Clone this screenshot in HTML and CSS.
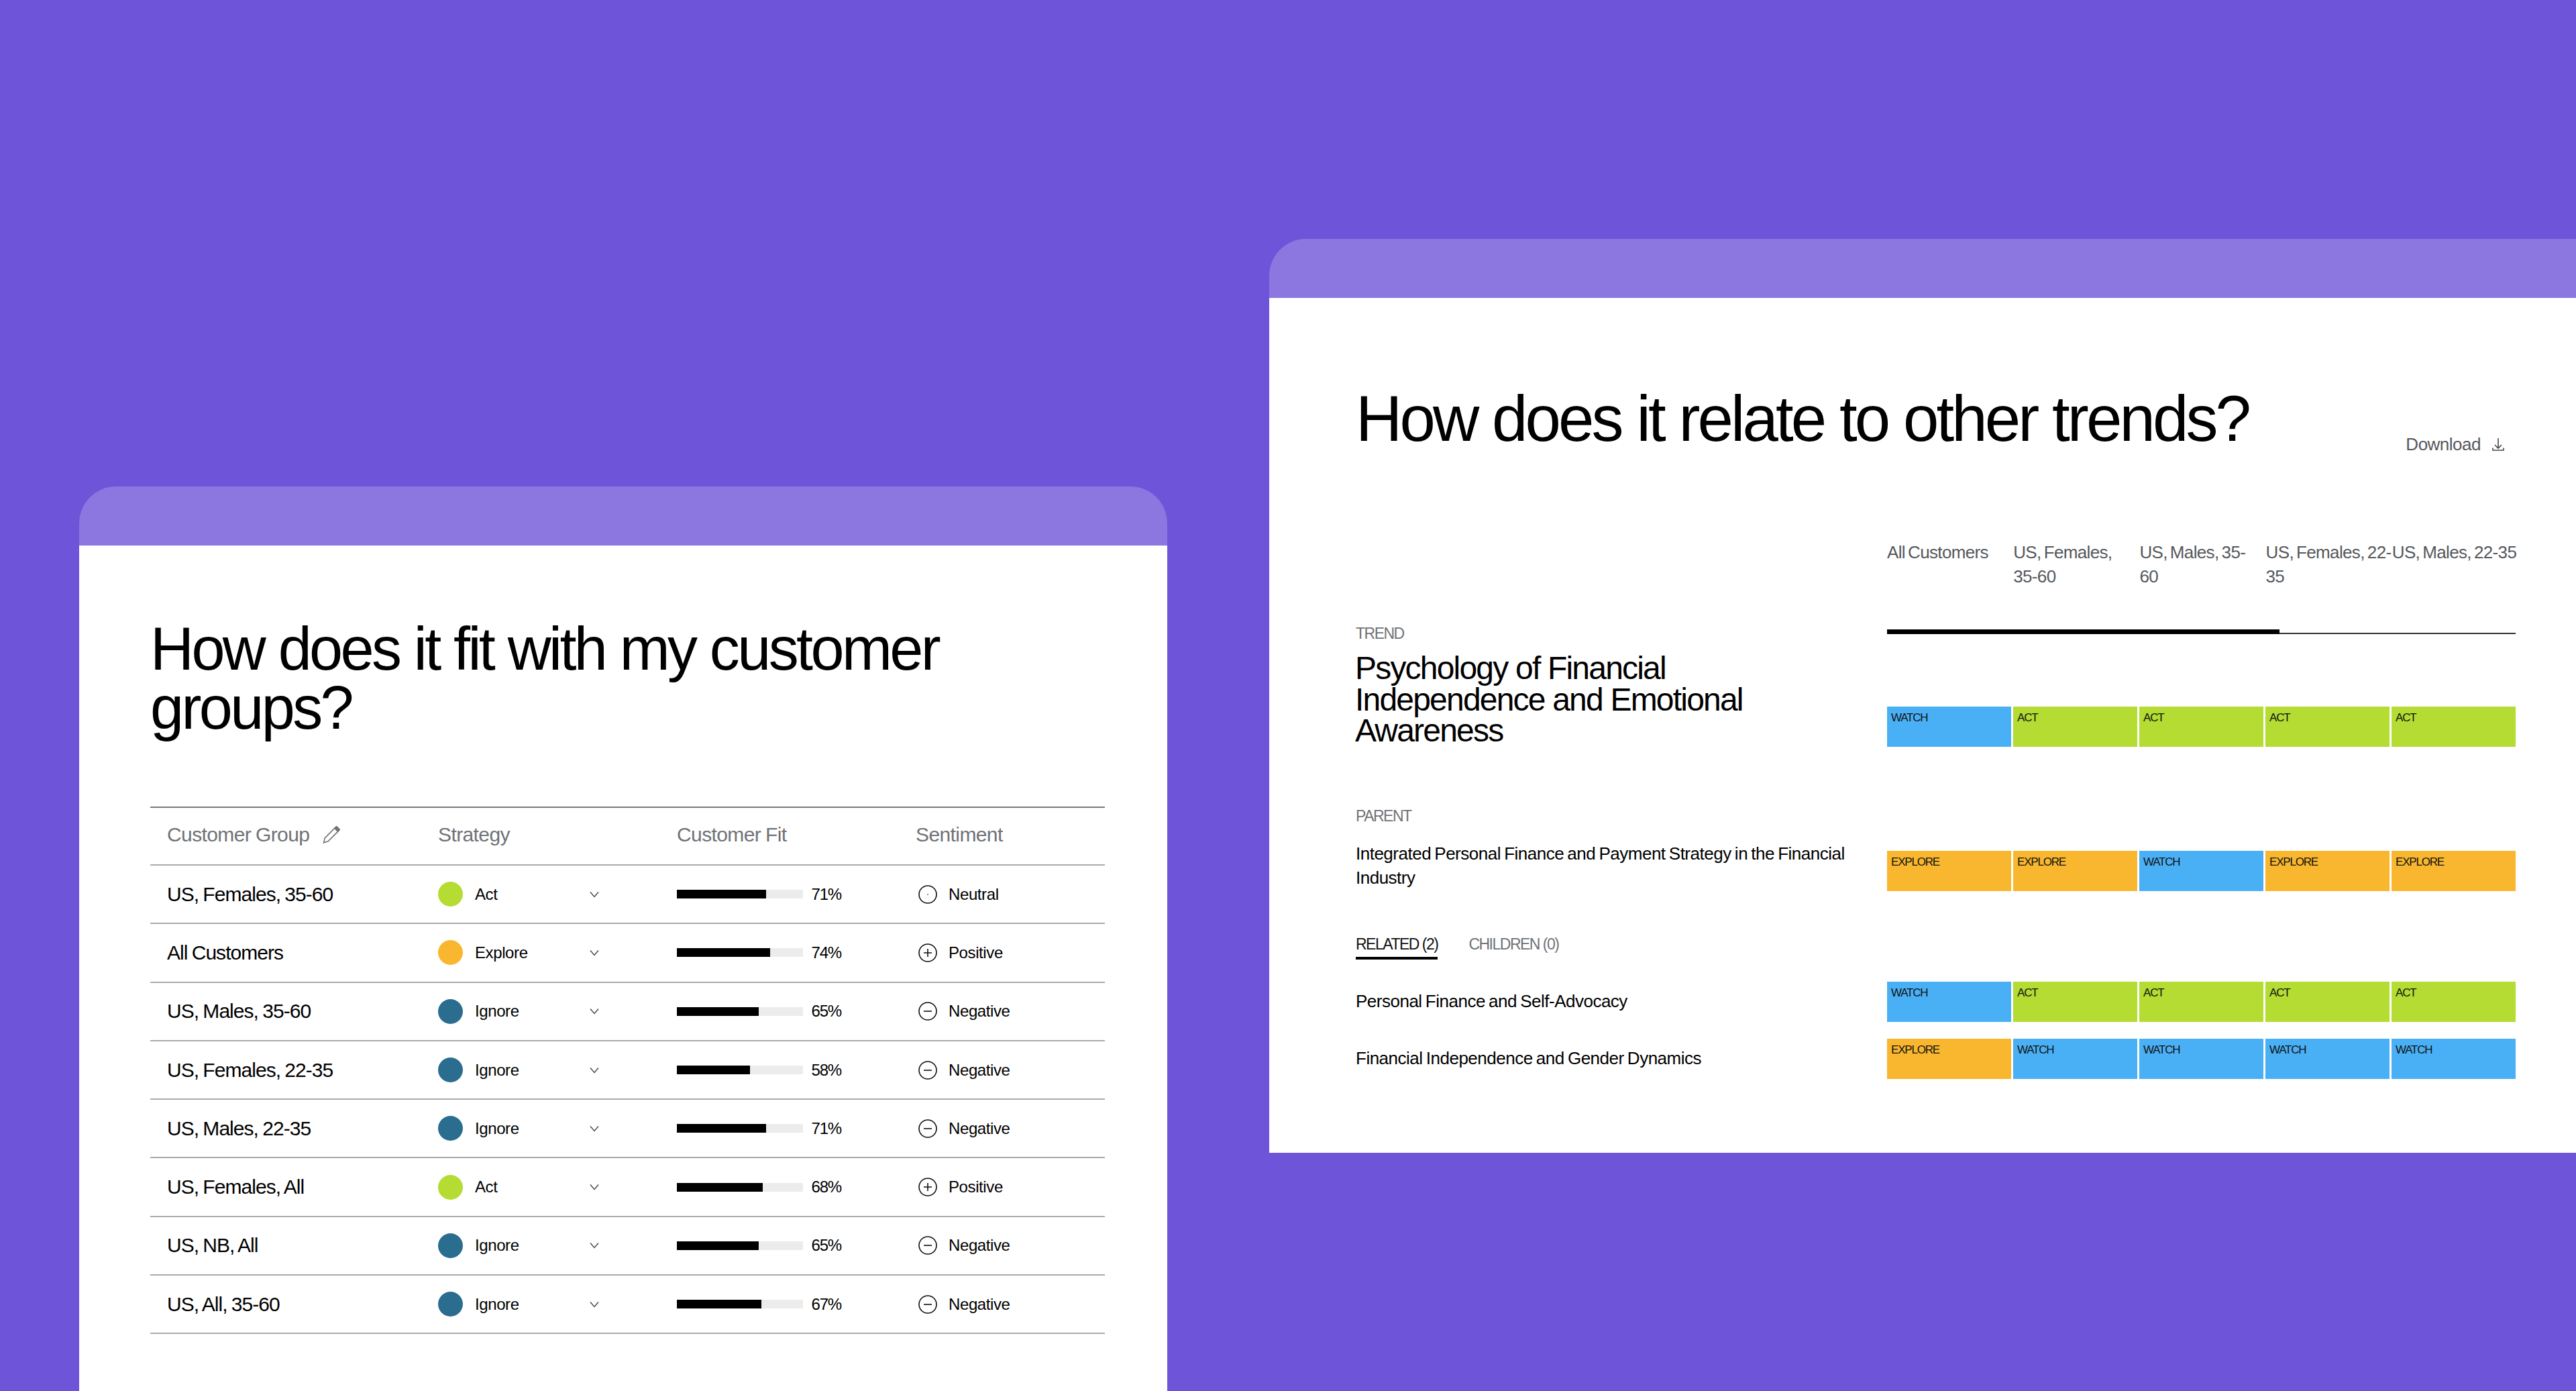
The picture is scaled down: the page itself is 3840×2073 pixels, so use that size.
FILE: index.html
```html
<!DOCTYPE html>
<html lang="en">
<head>
<meta charset="utf-8">
<title>Trend fit</title>
<link rel="stylesheet" href="styles.css">
</head>
<body>
<main class="canvas">

<section class="card card-left">
  <div class="card-tab"></div>
  <div class="card-body left-body">
    <h2 class="title title-left">How does it fit with my customer groups?</h2>
    <div class="table">
      <div class="tr th">
        <div class="th-cell">Customer Group<svg class="pencil" viewBox="0 0 24 24"><path d="M1.500 23L3 16.500 16.500 3 21 7.500 7.500 21z"/><path class="pencil-top" d="M16.500 3L19 .5 23.500 5 21 7.500z"/></svg></div>
        <div>Strategy</div>
        <div>Customer Fit</div>
        <div>Sentiment</div>
      </div>
      <div class="tr">
        <div class="name">US, Females, 35-60</div>
        <div class="strategy"><span class="dot dot-act"></span>Act<svg class="chev" viewBox="0 0 14 10"><path d="M1 1.500l6 7 6-7"/></svg></div>
        <div class="fit"><span class="track"><span class="fill" style="width:71%"></span></span><span>71%</span></div>
        <div class="sentiment"><svg class="sent" viewBox="0 0 28 28"><circle cx="14" cy="14" r="13"/><circle class="pt" cx="14" cy="14" r="0.8"/></svg>Neutral</div>
      </div>
      <div class="tr">
        <div class="name">All Customers</div>
        <div class="strategy"><span class="dot dot-explore"></span>Explore<svg class="chev" viewBox="0 0 14 10"><path d="M1 1.500l6 7 6-7"/></svg></div>
        <div class="fit"><span class="track"><span class="fill" style="width:74%"></span></span><span>74%</span></div>
        <div class="sentiment"><svg class="sent" viewBox="0 0 28 28"><circle cx="14" cy="14" r="13"/><path d="M8 14h12M14 8v12"/></svg>Positive</div>
      </div>
      <div class="tr">
        <div class="name">US, Males, 35-60</div>
        <div class="strategy"><span class="dot dot-ignore"></span>Ignore<svg class="chev" viewBox="0 0 14 10"><path d="M1 1.500l6 7 6-7"/></svg></div>
        <div class="fit"><span class="track"><span class="fill" style="width:65%"></span></span><span>65%</span></div>
        <div class="sentiment"><svg class="sent" viewBox="0 0 28 28"><circle cx="14" cy="14" r="13"/><path d="M8 14h12"/></svg>Negative</div>
      </div>
      <div class="tr">
        <div class="name">US, Females, 22-35</div>
        <div class="strategy"><span class="dot dot-ignore"></span>Ignore<svg class="chev" viewBox="0 0 14 10"><path d="M1 1.500l6 7 6-7"/></svg></div>
        <div class="fit"><span class="track"><span class="fill" style="width:58%"></span></span><span>58%</span></div>
        <div class="sentiment"><svg class="sent" viewBox="0 0 28 28"><circle cx="14" cy="14" r="13"/><path d="M8 14h12"/></svg>Negative</div>
      </div>
      <div class="tr">
        <div class="name">US, Males, 22-35</div>
        <div class="strategy"><span class="dot dot-ignore"></span>Ignore<svg class="chev" viewBox="0 0 14 10"><path d="M1 1.500l6 7 6-7"/></svg></div>
        <div class="fit"><span class="track"><span class="fill" style="width:71%"></span></span><span>71%</span></div>
        <div class="sentiment"><svg class="sent" viewBox="0 0 28 28"><circle cx="14" cy="14" r="13"/><path d="M8 14h12"/></svg>Negative</div>
      </div>
      <div class="tr">
        <div class="name">US, Females, All</div>
        <div class="strategy"><span class="dot dot-act"></span>Act<svg class="chev" viewBox="0 0 14 10"><path d="M1 1.500l6 7 6-7"/></svg></div>
        <div class="fit"><span class="track"><span class="fill" style="width:68%"></span></span><span>68%</span></div>
        <div class="sentiment"><svg class="sent" viewBox="0 0 28 28"><circle cx="14" cy="14" r="13"/><path d="M8 14h12M14 8v12"/></svg>Positive</div>
      </div>
      <div class="tr">
        <div class="name">US, NB, All</div>
        <div class="strategy"><span class="dot dot-ignore"></span>Ignore<svg class="chev" viewBox="0 0 14 10"><path d="M1 1.500l6 7 6-7"/></svg></div>
        <div class="fit"><span class="track"><span class="fill" style="width:65%"></span></span><span>65%</span></div>
        <div class="sentiment"><svg class="sent" viewBox="0 0 28 28"><circle cx="14" cy="14" r="13"/><path d="M8 14h12"/></svg>Negative</div>
      </div>
      <div class="tr">
        <div class="name">US, All, 35-60</div>
        <div class="strategy"><span class="dot dot-ignore"></span>Ignore<svg class="chev" viewBox="0 0 14 10"><path d="M1 1.500l6 7 6-7"/></svg></div>
        <div class="fit"><span class="track"><span class="fill" style="width:67%"></span></span><span>67%</span></div>
        <div class="sentiment"><svg class="sent" viewBox="0 0 28 28"><circle cx="14" cy="14" r="13"/><path d="M8 14h12"/></svg>Negative</div>
      </div>
    </div>
  </div>
</section>

<section class="card card-right">
  <div class="card-tab"></div>
  <div class="card-body right-body">
    <header class="right-head">
      <h2 class="title title-right">How does it relate to other trends?</h2>
      <div class="download">Download<svg class="dl" viewBox="0 0 18 20"><path d="M9 1v15M4 11l5 5 5-5M1 15.500V19h16v-3.500"/></svg></div>
    </header>

    <div class="row trend-row">
      <div class="label-col trend-left">
        <div class="eyebrow">TREND</div>
        <h3 class="trend-title">Psychology of Financial Independence and Emotional Awareness</h3>
      </div>
      <div class="cells-col">
        <div class="col-heads">
          <div>All Customers</div>
          <div>US, Females,<br>35-60</div>
          <div>US, Males, 35-<br>60</div>
          <div>US, Females, 22-<br>35</div>
          <div>US, Males, 22-35</div>
        </div>
        <div class="progress"><span class="progress-thick"></span><span class="progress-thin"></span></div>
        <div class="cells trend-cells">
          <div class="cell watch">WATCH</div><div class="cell act">ACT</div><div class="cell act">ACT</div><div class="cell act">ACT</div><div class="cell act">ACT</div>
        </div>
      </div>
    </div>

    <div class="eyebrow parent-label">PARENT</div>
    <div class="row parent-row">
      <div class="label-col item">Integrated Personal Finance and Payment Strategy in the Financial Industry</div>
      <div class="cells parent-cells">
        <div class="cell explore">EXPLORE</div><div class="cell explore">EXPLORE</div><div class="cell watch">WATCH</div><div class="cell explore">EXPLORE</div><div class="cell explore">EXPLORE</div>
      </div>
    </div>

    <div class="tabs">
      <div class="tab tab-active">RELATED (2)</div>
      <div class="tab">CHILDREN (0)</div>
    </div>

    <div class="row related-row">
      <div class="label-col item item-one">Personal Finance and Self-Advocacy</div>
      <div class="cells">
        <div class="cell watch">WATCH</div><div class="cell act">ACT</div><div class="cell act">ACT</div><div class="cell act">ACT</div><div class="cell act">ACT</div>
      </div>
    </div>
    <div class="row related-row related-second">
      <div class="label-col item item-one">Financial Independence and Gender Dynamics</div>
      <div class="cells">
        <div class="cell explore">EXPLORE</div><div class="cell watch">WATCH</div><div class="cell watch">WATCH</div><div class="cell watch">WATCH</div><div class="cell watch">WATCH</div>
      </div>
    </div>
  </div>
</section>

</main>
</body>
</html>
```

FILE: styles.css
```css
* { box-sizing: border-box; }
html, body { margin: 0; padding: 0; }
body { background: #6e54d8; font-family: "Liberation Sans", Arial, sans-serif; color: #000; }
.canvas { position: relative; width: 3840px; height: 2073px; overflow: hidden; background: #6e54d8; }

.card { position: absolute; overflow: hidden; }
.card-left { left: 118px; top: 725px; width: 1622px; height: 1348px; border-radius: 55px 55px 0 0; }
.card-right { left: 1892px; top: 356px; width: 1948px; height: 1362px; border-radius: 55px 0 0 0; }
.card-tab { height: 88px; background: #8c76e0; }
.card-body { background: #fff; height: 100%; }
.left-body { padding: 110px 93px 0 106px; }
.right-body { padding: 133px 90px 0 129px; }

.title { margin: 0; font-weight: 400; }
.title-left { font-size: 90px; line-height: 88px; letter-spacing: -3.6px; }
.title-right { font-size: 96px; line-height: 90px; letter-spacing: -3.9px; align-self: flex-start; margin-top: 2px; }

.table { margin-top: 103px; border-top: 2px solid #77797c; }
.tr { display: grid; grid-template-columns: 404px 356px 356px 1fr; align-items: center; height: 87.3px; padding-left: 25px; border-bottom: 2px solid #a9abad; font-size: 24px; letter-spacing: -0.4px; }
.th { height: 86px; padding-bottom: 4px; font-size: 30px; letter-spacing: -0.6px; word-spacing: -1px; color: #6f7277; }
.th-cell { display: flex; align-items: center; gap: 20px; }
.name { font-size: 30px; letter-spacing: -0.95px; word-spacing: -1.2px; }
.pencil { width: 26px; height: 26px; fill: none; stroke: #6f7277; stroke-width: 1.5; }
.pencil-top { fill: #6f7277; }
.strategy { display: flex; align-items: center; width: 240px; }
.dot { width: 37px; height: 37px; border-radius: 50%; margin-right: 18px; }
.dot-act { background: #b4dc33; }
.dot-explore { background: #f8b72f; }
.dot-ignore { background: #2a6d8f; }
.chev { width: 14px; height: 10px; margin-left: auto; fill: none; stroke: #444; stroke-width: 1.4; }
.fit { display: flex; align-items: center; gap: 13px; width: 245px; letter-spacing: -1.2px; }
.track { flex: 1; height: 13px; background: #ececec; display: block; }
.fill { display: block; height: 100%; background: #000; }
.sentiment { display: flex; align-items: center; gap: 17px; padding-left: 4px; }
.sent { width: 28px; height: 28px; fill: none; stroke: #111; stroke-width: 1.6; }
.pt { fill: #111; stroke: none; }

.right-head { display: flex; justify-content: space-between; align-items: flex-end; height: 103px; margin-bottom: 125px; }
.download { display: flex; align-items: center; gap: 17px; padding-right: 17px; font-size: 26px; line-height: 36px; letter-spacing: -0.5px; color: #55585c; }
.dl { width: 18px; height: 20px; fill: none; stroke: #45484c; stroke-width: 1.6; }

.row { display: flex; }
.label-col { width: 792px; flex: none; }
.trend-left { padding-top: 126px; }
.eyebrow { font-size: 23px; line-height: 26px; letter-spacing: -1.5px; color: #6f7277; }
.trend-title { margin: 16px 0 0 -1px; font-weight: 400; font-size: 48px; line-height: 46.5px; letter-spacing: -1.8px; max-width: 620px; }
.cells-col { width: 937px; flex: none; }
.col-heads { display: grid; grid-template-columns: repeat(5, 188.2px); height: 72px; font-size: 26px; line-height: 36px; letter-spacing: -0.65px; word-spacing: -2.5px; white-space: nowrap; color: #55585c; }
.progress { display: flex; align-items: flex-end; height: 7px; margin-top: 61px; }
.progress-thick { width: 585px; height: 7px; background: #000; }
.progress-thin { flex: 1; height: 2px; background: #333; }

.cells { display: grid; grid-template-columns: repeat(5, 185px); column-gap: 3px; flex: none; }
.trend-cells { margin-top: 108px; }
.cell { height: 60px; padding: 5px 6px; font-size: 17px; line-height: 24px; letter-spacing: -1.2px; color: #111; }
.watch { background: #4ab0f5; }
.act { background: #b4dc33; }
.explore { background: #f8b72f; }

.parent-label { margin-top: 90px; }
.parent-row { margin-top: 25px; }
.parent-cells { margin-top: 14px; }
.item { font-size: 26px; line-height: 36px; letter-spacing: -0.5px; word-spacing: -1.5px; padding-right: 40px; }
.item-one { align-self: center; margin-bottom: 2px; }

.tabs { display: flex; gap: 46px; margin-top: 66px; font-size: 23px; line-height: 26px; letter-spacing: -1.5px; color: #6f7277; }
.tab { padding-bottom: 6px; border-bottom: 4px solid transparent; }
.tab-active { color: #111; border-bottom-color: #000; }
.related-row { margin-top: 33px; }
.related-second { margin-top: 25px; }
```
